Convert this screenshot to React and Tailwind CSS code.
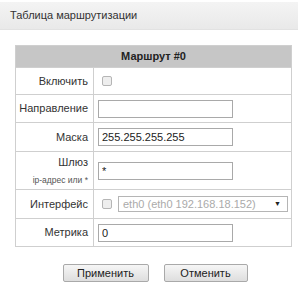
import React from "react";

const Row = ({ label, sub, h, children }) => (
    <div className={`flex border-t border-[#cfcfcf] ${h}`}>
        <div className="w-[78px] shrink-0 border-r border-[#cfcfcf] flex flex-col justify-center items-end pr-[5px] text-[11px] text-[#333]">
            <span>{label}</span>
            {sub && <span className="text-[8.5px] text-[#555] mt-[3px]">{sub}</span>}
        </div>
        <div className="flex items-center pl-[4px]">{children}</div>
    </div>
);

const Input = ({ value }) => (
    <input
        defaultValue={value}
        className="w-[135px] h-[18px] border border-[#a9a9a9] px-[3px] text-[11px] text-[#222] outline-none bg-white"
    />
);

const Check = () => (
    <span className="w-[10px] h-[10px] rounded-[2px] border border-[#b5b5b5] bg-[#eeeeee] inline-block" />
);

export default function App() {
    return (
        <div className="w-[300px] h-[290px] bg-white pt-[2px] font-[Liberation_Sans]">
            <div className="w-[298px] h-[28px] bg-gradient-to-b from-[#f4f4f4] to-[#e9e9e9] border-b border-[#e2e2e2] flex items-center pl-[10px] text-[11px] text-[#333]">
                Таблица маршрутизации
            </div>
            <div className="ml-[15px] mt-[15px] w-[277px] border border-[#cfcfcf]">
                <div className="h-[21px] bg-[#c6c6c6] flex items-center justify-center text-[11px] font-bold text-[#222]">
                    Маршрут #0
                </div>
                <Row label="Включить" h="h-[27px]">
                    <span className="ml-[4px] flex"><Check /></span>
                </Row>
                <Row label="Направление" h="h-[28px]">
                    <Input value="" />
                </Row>
                <Row label="Маска" h="h-[29px]">
                    <Input value="255.255.255.255" />
                </Row>
                <Row label="Шлюз" sub="ip-адрес или *" h="h-[38px]">
                    <Input value="*" />
                </Row>
                <Row label="Интерфейс" h="h-[29px]">
                    <span className="ml-[4px] mr-[6px] flex"><Check /></span>
                    <div className="w-[170px] h-[16px] border border-[#b5b5b5] flex items-center justify-between pl-[4px] pr-[6px] text-[11px] text-[#aaa]">
                        <span>eth0 (eth0 192.168.18.152)</span>
                        <span className="text-[7px] text-[#222]">▼</span>
                    </div>
                </Row>
                <Row label="Метрика" h="h-[28px]">
                    <Input value="0" />
                </Row>
            </div>
            <div className="flex justify-center gap-[15px] mt-[17px] pl-[10px]">
                <button className="w-[86px] h-[18px] border border-[#a9a9a9] rounded-[2px] bg-gradient-to-b from-[#f6f6f6] to-[#dedede] text-[11px] text-[#222]">
                    Применить
                </button>
                <button className="w-[84px] h-[18px] border border-[#a9a9a9] rounded-[2px] bg-gradient-to-b from-[#f6f6f6] to-[#dedede] text-[11px] text-[#222]">
                    Отменить
                </button>
            </div>
        </div>
    );
}
